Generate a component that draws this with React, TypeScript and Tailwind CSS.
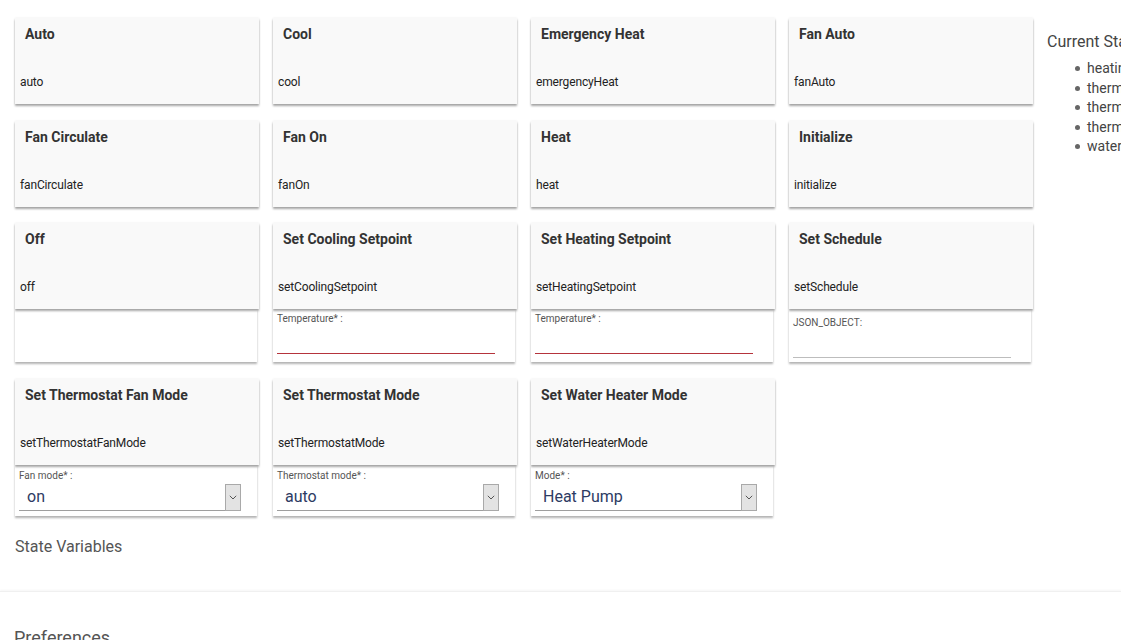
import React from "react";

type Cmd = {
  title: string;
  name: string;
  extra?:
    | { kind: "empty" }
    | { kind: "input"; label: string; color: "red" | "gray"; json?: boolean }
    | { kind: "select"; label: string; value: string };
};

const rows: Cmd[][] = [
  [
    { title: "Auto", name: "auto" },
    { title: "Cool", name: "cool" },
    { title: "Emergency Heat", name: "emergencyHeat" },
    { title: "Fan Auto", name: "fanAuto" },
  ],
  [
    { title: "Fan Circulate", name: "fanCirculate" },
    { title: "Fan On", name: "fanOn" },
    { title: "Heat", name: "heat" },
    { title: "Initialize", name: "initialize" },
  ],
  [
    { title: "Off", name: "off", extra: { kind: "empty" } },
    { title: "Set Cooling Setpoint", name: "setCoolingSetpoint", extra: { kind: "input", label: "Temperature* :", color: "red" } },
    { title: "Set Heating Setpoint", name: "setHeatingSetpoint", extra: { kind: "input", label: "Temperature* :", color: "red" } },
    { title: "Set Schedule", name: "setSchedule", extra: { kind: "input", label: "JSON_OBJECT:", color: "gray", json: true } },
  ],
  [
    { title: "Set Thermostat Fan Mode", name: "setThermostatFanMode", extra: { kind: "select", label: "Fan mode* :", value: "on" } },
    { title: "Set Thermostat Mode", name: "setThermostatMode", extra: { kind: "select", label: "Thermostat mode* :", value: "auto" } },
    { title: "Set Water Heater Mode", name: "setWaterHeaterMode", extra: { kind: "select", label: "Mode* :", value: "Heat Pump" } },
  ],
];

const rowMargins = ["mt-0", "mt-[17px]", "mt-[16px]", "mt-[17px]"];

function Extra({ extra }: { extra: NonNullable<Cmd["extra"]> }) {
  if (extra.kind === "empty") {
    return <div className="h-[53px] mr-[2px] bg-white shadow-[0_2px_2px_rgba(0,0,0,0.3)]" />;
  }
  if (extra.kind === "input") {
    return (
      <div className="h-[53px] mr-[2px] bg-white shadow-[0_2px_2px_rgba(0,0,0,0.3)] pl-[4px] flex flex-col">
        <div className={`${extra.json ? "mt-[7px]" : "mt-[3px]"} text-[10px] leading-[14px] text-[#555]`}>{extra.label}</div>
        <div
          className={`${extra.json ? "mt-[27px] border-[#bdbdbd]" : "mt-[27px] border-[#b5343c]"} w-[218px] border-b h-0`}
        />
      </div>
    );
  }
  return (
    <div className="h-[51px] mr-[2px] bg-white shadow-[0_2px_2px_rgba(0,0,0,0.3)] pl-[4px] flex flex-col">
      <div className="mt-[4px] text-[10px] leading-[14px] text-[#555]">{extra.label}</div>
      <div className="w-[222px] h-[28px] border-b border-[#9e9e9e] flex items-center justify-between">
        <span className="pl-[8px] text-[16px] leading-[20px] text-[#2d3b63]">{extra.value}</span>
        <span className="w-[16px] h-[27px] bg-[#e3e3e3] border border-[#a9a9a9] flex items-center justify-center mb-[-1px]">
          <svg width="8" height="5" viewBox="0 0 8 5">
            <path d="M0.8 0.8 L4 4 L7.2 0.8" fill="none" stroke="#555" strokeWidth="1" />
          </svg>
        </span>
      </div>
    </div>
  );
}

function Card({ c }: { c: Cmd }) {
  return (
    <div className="flex flex-col">
      <div className="h-[86px] bg-[#f9f9f9] shadow-[0_2px_2px_rgba(0,0,0,0.34),0_0_2px_rgba(0,0,0,0.08)] pt-[6px] relative z-10">
        <div className="pl-[10px] text-[14px] leading-[20px] font-bold text-[#333]">{c.title}</div>
        <div className="mt-[30px] pl-[5px] text-[12px] leading-[16px] tracking-[-0.15px] text-[#222]">{c.name}</div>
      </div>
      {c.extra && <Extra extra={c.extra} />}
    </div>
  );
}

const states = ["heatingSetpoint", "thermostatFanMode", "thermostatMode", "thermostatSetpoint", "waterHeaterMode"];

export default function App() {
  return (
    <div className="w-[1121px] h-[640px] overflow-hidden bg-white font-['Roboto',sans-serif]">
      <div className="flex">
        <div className="w-[1047px] shrink-0 pl-[15px] pt-[18px]">
          {rows.map((r, i) => (
            <div key={i} className={`${rowMargins[i]} grid grid-cols-[repeat(4,244px)] gap-x-[14px]`}>
              {r.map((c) => (
                <Card key={c.name} c={c} />
              ))}
            </div>
          ))}
        </div>
        <div className="pt-[30px] whitespace-nowrap">
          <div className="text-[16px] leading-[24px] text-[#444]">Current States</div>
          <ul className="mt-[5px] text-[14px] leading-[19.5px] text-[#444]">
            {states.map((s) => (
              <li key={s} className="flex items-center h-[19.5px]">
                <span className="ml-[28px] mr-[7px] w-[5px] h-[5px] rounded-full bg-[#666] shrink-0" />
                <span>{s}</span>
              </li>
            ))}
          </ul>
        </div>
      </div>
      <div className="pl-[15px] mt-[19px] text-[16px] leading-[24px] text-[#555]">State Variables</div>
      <div className="mt-[32px] h-[35px] border-t border-[#f0f0f0] shadow-[0_-1px_2px_rgba(0,0,0,0.04)]" />
      <div className="pl-[14px] text-[18px] leading-[24px] text-[#555]">Preferences</div>
    </div>
  );
}
